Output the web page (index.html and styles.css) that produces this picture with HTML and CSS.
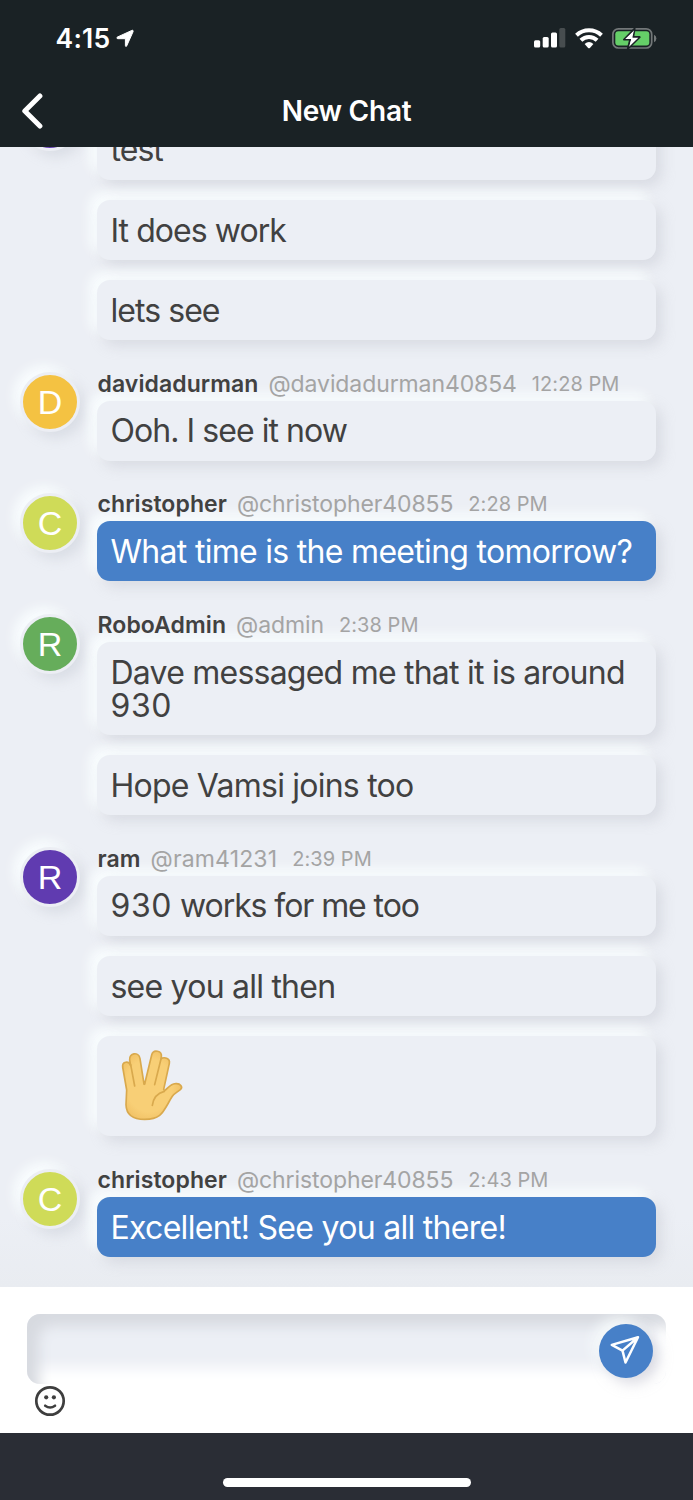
FILE: index.html
```html
<!DOCTYPE html>
<html lang="en">
<head>
<meta charset="utf-8">
<title>New Chat</title>
<link rel="stylesheet" href="styles.css">
</head>
<body>
<div class="phone">
  <header class="top">
    <div class="status">
      <span class="clock">4:15</span>
      <svg class="location" width="19" height="19" viewBox="0 0 19 19"><path d="M1.500 8 15.900 1.400c1-.4 1.600.3 1.200 1.200L10.700 16.900c-.4.900-1.300.7-1.300-.3V9.700H1.900C.6 9.700.500 8.500 1.500 8Z" fill="#fff" stroke="#fff" stroke-width="1" stroke-linejoin="round"/></svg>
      <div class="indicators">
        <svg width="32" height="20" viewBox="0 0 32 20">
          <g fill="#fff"><rect x="0" y="12.300" width="6.200" height="7.200" rx="1.500"/><rect x="8.700" y="9" width="6" height="10.500" rx="1.500"/><rect x="17" y="4.500" width="6" height="15" rx="1.500"/></g>
          <rect x="25.300" y="0" width="6" height="19.500" rx="1.500" fill="#474d4f"/>
        </svg>
        <svg class="wifi" width="28" height="21" viewBox="0 0 28 21">
          <g fill="none" stroke="#fff" stroke-width="4"><path d="M1.500 7.200a18.200 18.200 0 0 1 25 0"/><path d="M5.900 12.200a11.700 11.700 0 0 1 16.200 0"/></g>
          <path d="M9.600 15.900a6.900 6.900 0 0 1 8.800 0L14.900 19.900q-.9.800-1.800 0Z" fill="#fff"/>
        </svg>
        <svg class="battery" width="45" height="23" viewBox="0 0 45 23">
          <rect x=".9" y="1.800" width="38.800" height="19.200" rx="5.500" fill="none" stroke="#737879" stroke-width="1.700"/>
          <path d="M42 7.800v7.400q2.400-1.300 2.400-3.700T42 7.800Z" fill="#737879"/>
          <rect x="3.300" y="4.200" width="34" height="14.400" rx="3" fill="#65cf68"/>
          <path d="M22.600 1.700 12 12.600h6.200L15.900 21.500 27.700 10.100h-6.500Z" fill="#fff" stroke="#1a2225" stroke-width="2" stroke-linejoin="round"/>
          <path d="M22 3.500 13.200 12h6.100l-2.200 7.700L26.300 10.800h-6.200Z" fill="#fff"/>
        </svg>
      </div>
    </div>
    <div class="navbar">
      <svg width="21" height="36" viewBox="0 0 21 36"><path d="M17.900 3 2.800 18 17.900 33" fill="none" stroke="#fff" stroke-width="5" stroke-linecap="round" stroke-linejoin="round"/></svg>
      <h1 class="title">New Chat</h1>
    </div>
  </header>

  <main class="messages">
    <section class="group">
      <div class="avatar purple">R</div>
      <div class="body">
        <div class="meta"></div>
        <p class="bubble tight">test</p>
        <p class="bubble tight">It does work</p>
        <p class="bubble tight">lets see</p>
      </div>
    </section>
    <section class="group">
      <div class="avatar amber">D</div>
      <div class="body">
        <div class="meta"><b class="name">davidadurman</b><span class="handle">@davidadurman40854</span><time class="time">12:28 PM</time></div>
        <p class="bubble tight">Ooh. I see it now</p>
      </div>
    </section>
    <section class="group">
      <div class="avatar lime">C</div>
      <div class="body">
        <div class="meta"><b class="name">christopher</b><span class="handle">@christopher40855</span><time class="time">2:28 PM</time></div>
        <p class="bubble own">What time is the meeting tomorrow?</p>
      </div>
    </section>
    <section class="group">
      <div class="avatar green">R</div>
      <div class="body">
        <div class="meta"><b class="name">RoboAdmin</b><span class="handle">@admin</span><time class="time">2:38 PM</time></div>
        <p class="bubble">Dave messaged me that it is around <span class="digits">930</span></p>
        <p class="bubble">Hope Vamsi joins too</p>
      </div>
    </section>
    <section class="group">
      <div class="avatar purple">R</div>
      <div class="body">
        <div class="meta"><b class="name">ram</b><span class="handle wide">@ram41231</span><time class="time">2:39 PM</time></div>
        <p class="bubble mixed"><span class="digits">930</span> works for me too</p>
        <p class="bubble">see you all then</p>
        <div class="bubble emoji">
          <svg width="64" height="74" viewBox="94 92 192 222" role="img" aria-label="Vulcan salute">
            <defs><radialGradient id="skin" cx=".45" cy=".5" r=".6"><stop offset=".65" stop-color="#f8cf76"/><stop offset="1" stop-color="#efbd60"/></radialGradient></defs>
            <path d="M111 215 99 146c-2-17 19-20 24-4l-3-17c-3-22 27-26 31-4l12 76h2l21-87c5-19 32-13 29 6l-1 6c9-8 28-2 25 13l-17 78 3 4c11-8 17-20 32-21 15-2 24 10 15 18-10 8-18 11-24 20-14 21-23 45-38 57-14 11-29 12-45 12-34 0-55-14-56-44Z" fill="url(#skin)" stroke="#d9a94d" stroke-width="5" stroke-linejoin="round"/>
            <path d="M123 139 135 203M214 122 195 199M224 219c-20 5-33 20-36 42M164 192v6" fill="none" stroke="#d9a94d" stroke-width="5" stroke-linecap="round"/>
          </svg>
        </div>
      </div>
    </section>
    <section class="group">
      <div class="avatar lime">C</div>
      <div class="body">
        <div class="meta"><b class="name">christopher</b><span class="handle">@christopher40855</span><time class="time">2:43 PM</time></div>
        <p class="bubble own">Excellent! See you all there!</p>
      </div>
    </section>
  </main>

  <footer class="composer">
    <div class="field">
      <button class="send" aria-label="Send">
        <svg width="30" height="30" viewBox="0 0 30 30" fill="none" stroke="#fff" stroke-width="2.500" stroke-linejoin="round"><path d="M28 2.200 1.800 9.900 12.500 15.600 15.500 27.500ZM12.500 15.600 28 2.200"/></svg>
      </button>
    </div>
    <svg class="smile" width="32" height="32" viewBox="0 0 32 32"><circle cx="16" cy="16" r="13.700" fill="none" stroke="#3e3e3e" stroke-width="2.700"/><circle cx="12.200" cy="12.300" r="2.100" fill="#3e3e3e"/><circle cx="19.900" cy="12.300" r="2.100" fill="#3e3e3e"/><path d="M11.200 20.700q4.900 3.600 9.800 0" fill="none" stroke="#3e3e3e" stroke-width="2.600" stroke-linecap="round"/></svg>
  </footer>
  <div class="home"><div class="home-bar"></div></div>
</div>
</body>
</html>
```
FILE: styles.css
```css
* { box-sizing: border-box; }

body {
  margin: 0;
  font-family: Inter, "Liberation Sans", sans-serif;
  color: #414141;
}

.phone {
  display: flex;
  flex-direction: column;
  width: 693px;
  height: 1500px;
  overflow: hidden;
  background: #eceff5;
}

/* Header */
.top {
  flex: none;
  height: 147.400px;
  background: #1a2225;
  color: #fff;
}

.status {
  display: flex;
  align-items: center;
  height: 76px;
  padding: 0 36px 0 55.500px;
}

.clock {
  font-size: 26.500px;
  font-weight: 600;
  letter-spacing: .23px;
}

.location { margin-left: 6px; }

.indicators {
  display: flex;
  align-items: center;
  margin-left: auto;
}

.wifi { margin-left: 9px; }
.battery { margin-left: 9px; }

.navbar {
  display: grid;
  grid-template-columns: 21px 1fr 21px;
  align-items: center;
  height: 70px;
  padding: 0 22px;
}

.title {
  margin: 0;
  font-size: 28px;
  font-weight: 600;
  letter-spacing: -.25px;
  text-align: center;
}

/* Conversation */
.messages {
  flex: 1;
  display: flex;
  flex-direction: column;
  justify-content: flex-end;
  gap: 20.550px;
  min-height: 0;
  padding: 0 37px 30px 20px;
  overflow: hidden;
  background: linear-gradient(#eceff5 94%, #e9ecf1);
}

.group {
  flex: none;
  display: flex;
  gap: 17px;
}

.avatar {
  display: grid;
  place-items: center;
  width: 60px;
  height: 60px;
  margin-top: 11.500px;
  border: 3px solid #eceef4;
  border-radius: 50%;
  color: #fff;
  font-family: "Liberation Sans", sans-serif;
  font-size: 34px;
  line-height: 1;
  box-shadow: 6px 6px 12px rgba(190, 194, 204, .38), -6px -6px 12px #fafeff;
}

.purple { background: #603bb0; }
.amber { background: #f4c242; }
.lime { background: #cfdb58; }
.green { background: #66ad5b; }

.body { flex: 1; }

.meta {
  display: flex;
  align-items: center;
  height: 40px;
  padding: 6px 0 0 .5px;
  font-size: 23px;
  line-height: 34px;
}

.name { font-weight: 600; letter-spacing: .08px; }
.handle { margin-left: 10px; color: #a4a4a4; letter-spacing: -.1px; }
.wide { letter-spacing: .15px; }
.time { margin-left: 15px; color: #a4a4a4; font-size: 20px; letter-spacing: .06px; }

.bubble {
  margin: 0;
  padding: 13.500px;
  border-radius: 13px;
  background: #eceff5;
  font-size: 32px;
  line-height: 33px;
  letter-spacing: -.77px;
  box-shadow: 6px 6px 13px rgba(190, 194, 202, .42), -7px -7px 12px #fafeff;
}

.bubble + .bubble { margin-top: 20.300px; }
.tight { letter-spacing: -.95px; }
.mixed { letter-spacing: -1.080px; }
.digits { letter-spacing: .6px; }
.own { background: #4780c8; color: #fff; letter-spacing: -.7px; }

.emoji {
  height: 100px;
  padding: 13px 24px;
  line-height: 0;
}

/* Composer */
.composer {
  flex: none;
  height: 146px;
  padding: 27px 27px 0;
  background: #fff;
}

.field {
  display: flex;
  justify-content: flex-end;
  height: 70px;
  padding: 10px 13.500px 0 0;
  border-radius: 13px;
  background: #eceff5;
  box-shadow: inset 12px 12px 13px #d7dae0, inset -12px -16px 14px #fff;
}

.send {
  display: grid;
  place-items: center;
  width: 54px;
  height: 54px;
  padding: 0 1px 2px 0;
  border: 0;
  border-radius: 50%;
  background: #4780c8;
  box-shadow: 6px 6px 13px rgba(190, 190, 204, .5), -6px -6px 13px #f7fbfc;
}

.smile { display: block; margin: 1px 0 0 7.300px; }

.home {
  flex: none;
  display: flex;
  justify-content: center;
  height: 67px;
  padding-top: 44.500px;
  background: #2a2d35;
}

.home-bar {
  width: 248px;
  height: 9px;
  border-radius: 5px;
  background: #fff;
}
```
